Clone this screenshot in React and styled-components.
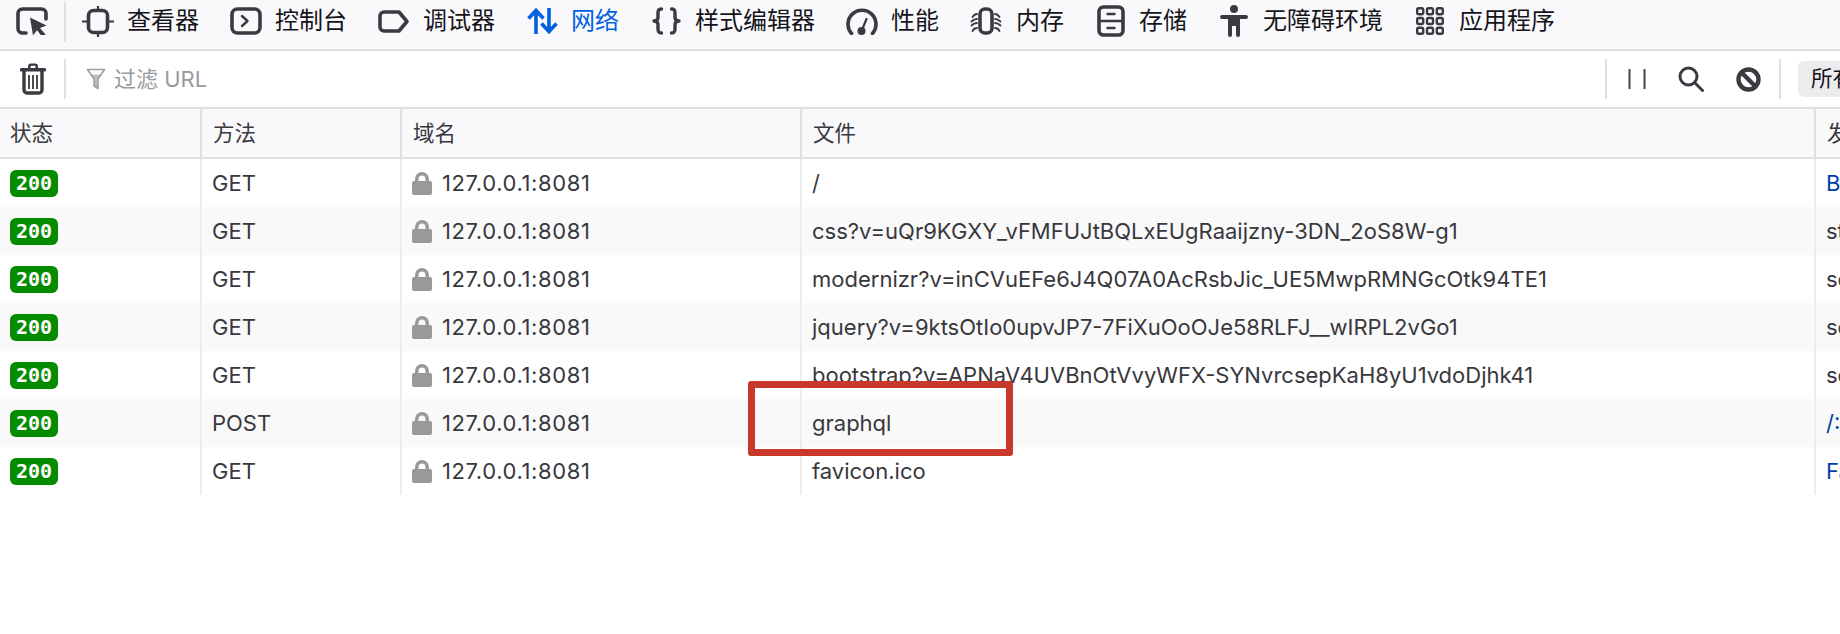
import React from 'react';
import styled, { createGlobalStyle } from 'styled-components';

const Global = createGlobalStyle`
  html, body { margin: 0; padding: 0; background: #fff; overflow: hidden; }
  body { font-family: Inter, "Noto Sans CJK SC", sans-serif; color: #38383d; }
`;
const Page = styled.div`position: relative; width: 1840px; height: 634px; overflow: hidden; background: #fff;`;
const Toolbar = styled.div`
  height: 49px; background: #f9f9fb; border-bottom: 2px solid #e0e0e2; white-space: nowrap;
`;
const ToolRow = styled.div`display: flex; align-items: center; height: 42px;`;
const PickBtn = styled.div`display: flex; width: 66px; height: 41px; align-items: center; padding-left: 16px; box-sizing: border-box; border-right: 2px solid #e0e0e2;`;
const Tab = styled.div`
  display: flex; align-items: center; gap: ${p => p.$gap}px; margin-left: ${p => p.$ml}px;
  font-size: 24px; color: ${p => (p.$active ? '#0060df' : '#15141a')};
`;
const TabLabel = styled.span`line-height: 30px; padding-bottom: 1px;`;
const FilterBar = styled.div`
  display: flex; align-items: center; width: 1858px; height: 56px; border-bottom: 2px solid #e0e0e2; white-space: nowrap;
`;
const TrashBtn = styled.div`display: flex; width: 66px; height: 40px; padding-left: 20px; box-sizing: border-box; align-items: center; border-right: 2px solid #e0e0e2;`;
const Filter = styled.div`display: flex; align-items: center; gap: 8px; margin-left: 20px; flex: 1; font-size: 22px; color: #9a9a9e;`;
const FilterText = styled.span`line-height: 30px; padding-bottom: 1px;`;
const Tools = styled.div`display: flex; align-items: center; height: 40px; width: 176px; padding-left: 21px; box-sizing: border-box; border-left: 2px solid #e0e0e2; border-right: 2px solid #e0e0e2; gap: 32px; flex: none;`;
const Chip = styled.div`margin-left: 17px; width: 60px; height: 36px; padding-left: 13px; box-sizing: border-box; border-radius: 6px; background: #ececee; font-size: 21.5px; line-height: 34px; color: #15141a; flex: none;`;
const Grid = styled.div`display: grid; grid-template-columns: 202px 200px 400px 1014px 300px; width: 2116px;`;
const Header = styled.div`
  height: 50px; box-sizing: border-box; background: #f9f9fb; border-bottom: 2px solid #e0e0e2; border-right: 2px solid #e0e0e2;
  padding-left: 10px; font-size: 21.5px; line-height: 48px; white-space: nowrap; color: #38383d;
  &:nth-child(n+2) { padding-left: 11px; }
`;
const Cell = styled.div`
  height: 48px; box-sizing: border-box; display: flex; align-items: center;
  padding-left: 10px; border-right: 2px solid #ededf0; background: ${p => (p.$alt ? '#f9f9fa' : '#fff')};
  font-size: 22px; white-space: nowrap; overflow: hidden; color: ${p => (p.$link ? '#003eaa' : '#38383d')};
`;
const DomainCell = styled(Cell)`gap: 10px; letter-spacing: 0.6px;`;
const Badge = styled.span`
  display: inline-block; width: 48px; height: 27px; border-radius: 6px; background: #058b00; color: #fff;
  font: bold 20px/27px "DejaVu Sans Mono", monospace; text-align: center; letter-spacing: 0;
`;
const Highlight = styled.div`
  position: absolute; left: 748px; top: 381px; width: 265px; height: 75px; box-sizing: border-box;
  border: 7px solid #c8392b; border-radius: 3px;
`;

const D = '#3a3a40';
const S = { fill: 'none', stroke: D, strokeWidth: 3.6, strokeLinecap: 'round', strokeLinejoin: 'round' };
const Icon = ({ w = 28, h = 28, children }) => <svg width={w} height={h} viewBox={`0 0 ${w} ${h}`} style={{ flex: 'none', display: 'block' }}>{children}</svg>;

const Pick = () => <Icon w={32} h={28}><path {...S} d="M10 26H6.500a4.500 4.500 0 0 1-4.500-4.500V6.500A4.500 4.500 0 0 1 6.500 2h19A4.500 4.500 0 0 1 30 6.500V12" /><path fill={D} d="M14 10.500l16.500 8-6.500 2.500 5.500 6.500-3.200 2.500-5.300-6.800-4 5.300z" /></Icon>;
const Inspector = () => <Icon w={32} h={31}><rect {...S} x="6.500" y="4.500" width="19" height="22" rx="5" /><path stroke={D} strokeWidth="2.200" d="M16 0v4M16 27v4M0 15.500h6M26 15.500h6" /></Icon>;
const ConsoleI = () => <Icon w={32} h={28}><rect {...S} x="2" y="2" width="28" height="24" rx="5.500" /><path {...S} strokeWidth="2.400" d="M12 9l5.500 5-5.500 5" /></Icon>;
const Debug = () => <Icon w={32} h={23}><path {...S} strokeLinejoin="round" d="M6 2h15l8 9.500-8 9.500H6a4 4 0 0 1-4-4V6a4 4 0 0 1 4-4z" /></Icon>;
const Net = () => <Icon w={31} h={28}><g fill="none" stroke="#0060df" strokeWidth="3.600"><path d="M9 27V3M1.500 11.500L9 3.500l7.500 8" /><path d="M22 1v24M14.500 16.500l7.500 8 7.500-8" /></g></Icon>;
const Style = () => <Icon w={29} h={28}><g {...S} strokeWidth="3.400"><path d="M9.500 2C6.500 2 6 3.500 6 6v4.500c0 2-1 3.200-4 3.500 3 .3 4 1.500 4 3.500V22c0 2.500.5 4 3.500 4" /><path d="M19.500 2c3 0 3.500 1.500 3.500 4v4.500c0 2 1 3.200 4 3.500-3 .3-4 1.500-4 3.500V22c0 2.500-.5 4-3.500 4" /></g></Icon>;
const Perf = () => <Icon w={32} h={28}><path {...S} d="M5.500 26.500A14 14 0 1 1 26.500 26.500" /><circle cx="15.500" cy="24" r="4" fill={D} /><path stroke={D} strokeWidth="2.200" strokeLinecap="round" fill="none" d="M16 23l4.500-11" /></Icon>;
const Memory = () => <Icon w={32} h={28}><rect {...S} x="10" y="2" width="12" height="24" rx="5" /><g fill="none" stroke={D} strokeWidth="1.800" strokeLinecap="round"><path d="M7 7C5 7 3.500 8.500 2.500 10M7 12C5 12 3 13 1.500 14.500M7 16C5 16 3 17 1.500 18.500M7 21C5 21 3.500 22 2.500 24" /><path d="M25 7c2 0 3.500 1.500 4.500 3M25 12c2 0 4 1 5.500 2.500M25 16c2 0 4 1 5.500 2.500M25 21c2 0 3.500 1 4.500 3" /></g></Icon>;
const Storage = () => <Icon w={28} h={32}><rect {...S} x="2" y="2" width="24" height="28" rx="4.500" /><path {...S} strokeWidth="2.400" d="M3 16h22" /><path {...S} strokeWidth="2.400" d="M10.500 9h7M10.500 23h7" /></Icon>;
const Access = () => <Icon w={28} h={32}><circle cx="14" cy="4" r="4" fill={D} /><path fill={D} d="M2 10h24a2 2 0 0 1 0 4h-6v16a2 2 0 0 1-4 0v-9h-4v9a2 2 0 0 1-4 0V14H2a2 2 0 0 1 0-4z" /></Icon>;
const Apps = () => <Icon w={28} h={28}>{[1.200, 11, 20.800].flatMap(y => [1.200, 11, 20.800].map(x => <rect key={`${x}-${y}`} x={x} y={y} width="6" height="6" rx="1.500" fill="none" stroke={D} strokeWidth="2.400" />))}</Icon>;
const Trash = () => <Icon w={26} h={32}><path fill={D} d="M8 3.500A3 3 0 0 1 11 .5h4a3 3 0 0 1 3 3V5h6.500a1.500 1.500 0 0 1 0 3.500h-23a1.500 1.500 0 0 1 0-3.500H8zm2.500 1.500h5V3.500a.8.8 0 0 0-.8-.8h-3.400a.8.8 0 0 0-.8.8z" /><path {...S} strokeWidth="3.400" d="M4 8v19a3 3 0 0 0 3 3h12a3 3 0 0 0 3-3V8" /><path stroke={D} strokeWidth="1.800" d="M9 12v14M13 12v14M17 12v14" /></Icon>;
const Funnel = () => <Icon w={20} h={22}><path fill="#bcbcbf" d="M4.500 6.500h11L11.500 12v8l-3-2v-6z" /><path fill="none" stroke="#a0a0a4" strokeWidth="1.600" strokeLinejoin="round" d="M1.500 1.500h17L12 11v9.500L8 18v-7z" /></Icon>;
const Pause = () => <Icon w={18} h={20}><path stroke="#45454a" strokeWidth="2" d="M1.500 0v20M16.500 0v20" /></Icon>;
const Search = () => <Icon w={26} h={26}><circle {...S} strokeWidth="3" cx="10.500" cy="10.500" r="8.500" /><path {...S} strokeWidth="3" d="M16.500 16.500l8 8" /></Icon>;
const Block = () => <Icon w={25} h={25}><circle {...S} strokeWidth="4.400" cx="12.500" cy="12.500" r="10" /><path {...S} strokeWidth="4.400" strokeLinecap="butt" d="M5.500 5.500l14 14" /></Icon>;
const Lock = () => <svg width="20" height="24" viewBox="0 0 20 24" style={{ flex: 'none' }}><path fill="#999" d="M3 10V8a7 7 0 0 1 14 0v2h1a2 2 0 0 1 2 2v10a2 2 0 0 1-2 2H2a2 2 0 0 1-2-2V12a2 2 0 0 1 2-2zm3.500 0h7V8a3.500 3.500 0 0 0-7 0z" /></svg>;

const tabs = [
  { label: '查看器', I: Inspector, ml: 16, gap: 13 },
  { label: '控制台', I: ConsoleI, ml: 31, gap: 13 },
  { label: '调试器', I: Debug, ml: 31, gap: 13 },
  { label: '网络', I: Net, ml: 32, gap: 13 },
  { label: '样式编辑器', I: Style, ml: 33, gap: 14 },
  { label: '性能', I: Perf, ml: 31, gap: 13 },
  { label: '内存', I: Memory, ml: 31, gap: 14 },
  { label: '存储', I: Storage, ml: 33, gap: 14 },
  { label: '无障碍环境', I: Access, ml: 33, gap: 15 },
  { label: '应用程序', I: Apps, ml: 33, gap: 15 },
];
const rows = [
  ['GET', '/', 'BrowserTabChild.jsm:1', true],
  ['GET', 'css?v=uQr9KGXY_vFMFUJtBQLxEUgRaaijzny-3DN_2oS8W-g1', 'stylesheet', false],
  ['GET', 'modernizr?v=inCVuEFe6J4Q07A0AcRsbJic_UE5MwpRMNGcOtk94TE1', 'script', false],
  ['GET', 'jquery?v=9ktsOtIo0upvJP7-7FiXuOoOJe58RLFJ__wIRPL2vGo1', 'script', false],
  ['GET', 'bootstrap?v=APNaV4UVBnOtVvyWFX-SYNvrcsepKaH8yU1vdoDjhk41', 'script', false],
  ['POST', 'graphql', '/:1', true],
  ['GET', 'favicon.ico', 'FaviconLoader.jsm:191', true],
];

export default function App() {
  return (
    <Page>
      <Global />
      <Toolbar>
        <ToolRow>
          <PickBtn><Pick /></PickBtn>
          {tabs.map(({ label, I, ml, gap }) => (
            <Tab key={label} $ml={ml} $gap={gap} $active={label === '网络'}><I /><TabLabel>{label}</TabLabel></Tab>
          ))}
        </ToolRow>
      </Toolbar>
      <FilterBar>
        <TrashBtn><Trash /></TrashBtn>
        <Filter><Funnel /><FilterText>过滤 URL</FilterText></Filter>
        <Tools><Pause /><Search /><Block /></Tools>
        <Chip>所有</Chip>
      </FilterBar>
      <Grid>
        <Header>状态</Header>
        <Header>方法</Header>
        <Header>域名</Header>
        <Header>文件</Header>
        <Header>发起者</Header>
        {rows.map(([method, file, cause, link], i) => (
          <React.Fragment key={file}>
            <Cell $alt={i % 2 === 1}><Badge>200</Badge></Cell>
            <Cell $alt={i % 2 === 1}>{method}</Cell>
            <DomainCell $alt={i % 2 === 1}><Lock />127.0.0.1:8081</DomainCell>
            <Cell $alt={i % 2 === 1}>{file}</Cell>
            <Cell $alt={i % 2 === 1} $link={link}>{cause}</Cell>
          </React.Fragment>
        ))}
      </Grid>
      <Highlight />
    </Page>
  );
}
